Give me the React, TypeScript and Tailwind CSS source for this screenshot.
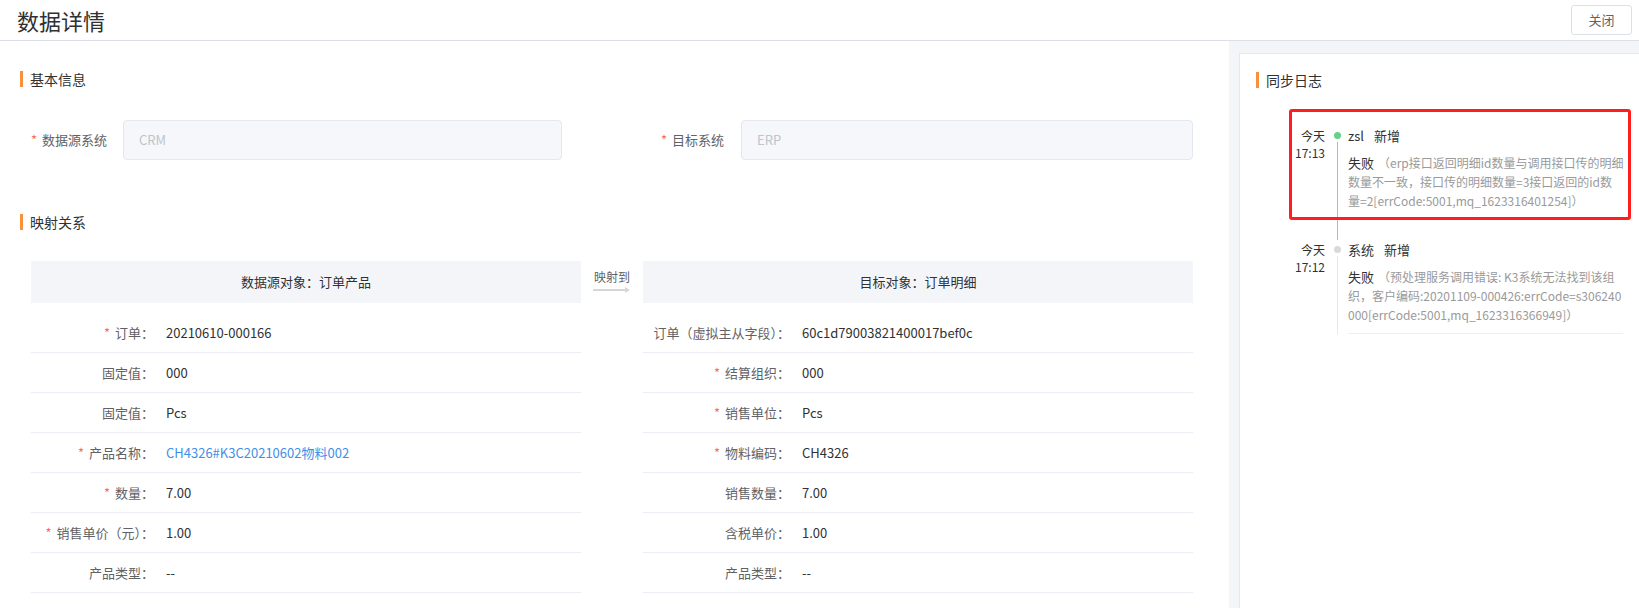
import React from 'react';

interface Field {
  label: string;
  value: string;
  required?: boolean;
  link?: boolean;
}

const sourceFields: Field[] = [
  { label: '订单：', value: '20210610-000166', required: true },
  { label: '固定值：', value: '000' },
  { label: '固定值：', value: 'Pcs' },
  { label: '产品名称：', value: 'CH4326#K3C20210602物料002', required: true, link: true },
  { label: '数量：', value: '7.00', required: true },
  { label: '销售单价（元）：', value: '1.00', required: true },
  { label: '产品类型：', value: '--' }
];

const targetFields: Field[] = [
  { label: '订单（虚拟主从字段）：', value: '60c1d79003821400017bef0c' },
  { label: '结算组织：', value: '000', required: true },
  { label: '销售单位：', value: 'Pcs', required: true },
  { label: '物料编码：', value: 'CH4326', required: true },
  { label: '销售数量：', value: '7.00' },
  { label: '含税单价：', value: '1.00' },
  { label: '产品类型：', value: '--' }
];

const logs = [
  {
    day: '今天',
    time: '17:13',
    user: 'zsl',
    action: '新增',
    active: true,
    lines: [
      '（erp接口返回明细id数量与调用接口传的明细',
      '数量不一致，接口传的明细数量=3接口返回的id数',
      '量=2[errCode:5001,mq_1623316401254]）'
    ]
  },
  {
    day: '今天',
    time: '17:12',
    user: '系统',
    action: '新增',
    active: false,
    lines: [
      '（预处理服务调用错误: K3系统无法找到该组',
      '织，客户编码:20201109-000426:errCode=s306240',
      '000[errCode:5001,mq_1623316366949]）'
    ]
  }
];

function SectionTitle({ text }: { text: string }) {
  return (
    <div className="flex items-center h-[20px]">
      <span className="w-[3px] h-[16px] bg-[#f7913d]" />
      <span className="ml-[7px] text-[14px] text-[#303133]">{text}</span>
    </div>
  );
}

function Star() {
  return <span className="text-[#f56c6c] mr-[5px]">*</span>;
}

function FieldRows({ fields, labelWidth }: { fields: Field[]; labelWidth: string }) {
  return (
    <div>
      {fields.map((f, i) => (
        <div key={i} className="flex items-center h-[40px] border-b border-[#ebeef5] text-[13px]">
          <div className={`${labelWidth} text-right text-[#606266] whitespace-nowrap`}>
            {f.required && <Star />}
            {f.label}
          </div>
          <div className={`pl-[12px] ${f.link ? 'text-[#3f8fe6]' : 'text-[#303133]'}`}>{f.value}</div>
        </div>
      ))}
    </div>
  );
}

export default function App() {
  return (
    <div className="w-[1639px] h-[608px] overflow-hidden bg-white font-[family-name:'Noto_Sans_CJK_SC',sans-serif] flex flex-col">
      {/* Header */}
      <div className="h-[41px] flex-shrink-0 border-b border-[#dcdfe6] flex items-center justify-between pl-[17px] pr-[7px]">
        <h1 className="text-[22px] text-[#303133] leading-none">数据详情</h1>
        <button className="w-[61px] h-[30px] border border-[#dcdfe6] rounded-[3px] text-[13px] text-[#606266] bg-white">
          关闭
        </button>
      </div>

      <div className="flex flex-1 min-h-0">
        {/* Main content */}
        <div className="flex-1 pt-[28px] pl-[20px]">
          <SectionTitle text="基本信息" />

          <div className="flex mt-[31px] text-[13px]">
            <div className="flex items-center">
              <div className="w-[103px] text-right pr-[16px] text-[#606266]">
                <Star />
                数据源系统
              </div>
              <div className="w-[439px] h-[40px] rounded-[4px] border border-[#e4e7ed] bg-[#f5f7fa] flex items-center px-[15px] text-[#c0c4cc]">
                CRM
              </div>
            </div>
            <div className="flex items-center">
              <div className="w-[179px] text-right pr-[17px] text-[#606266]">
                <Star />
                目标系统
              </div>
              <div className="w-[452px] h-[40px] rounded-[4px] border border-[#e4e7ed] bg-[#f5f7fa] flex items-center px-[15px] text-[#c0c4cc]">
                ERP
              </div>
            </div>
          </div>

          <div className="mt-[52px]">
            <SectionTitle text="映射关系" />
          </div>

          <div className="flex mt-[29px] pl-[11px]">
            <div className="w-[550px]">
              <div className="h-[42px] bg-[#f4f5f9] flex items-center justify-center text-[13px] text-[#303133]">
                数据源对象：订单产品
              </div>
              <div className="mt-[10px]">
                <FieldRows fields={sourceFields} labelWidth="w-[123px]" />
              </div>
            </div>
            <div className="w-[62px] h-[42px] flex flex-col items-center justify-center">
              <span className="text-[12px] text-[#606266] leading-[14px]">映射到</span>
              <svg width="38" height="8" viewBox="0 0 38 8" className="mt-[2px]">
                <line x1="0" y1="4" x2="33" y2="4" stroke="#d6d6d6" strokeWidth="2" />
                <path d="M32 1 L37 4 L32 7 Z" fill="#d6d6d6" />
              </svg>
            </div>
            <div className="w-[550px]">
              <div className="h-[42px] bg-[#f4f5f9] flex items-center justify-center text-[13px] text-[#303133]">
                目标对象：订单明细
              </div>
              <div className="mt-[10px]">
                <FieldRows fields={targetFields} labelWidth="w-[147px]" />
              </div>
            </div>
          </div>
        </div>

        {/* Sync log */}
        <div className="w-[410px] flex-shrink-0 bg-[#f4f5f9] pl-[10px] pt-[12px]">
          <div className="h-full bg-white border-l border-t border-[#e6e8ee] pt-[16px] pl-[16px] pr-[16px]">
            <SectionTitle text="同步日志" />
            <div className="relative mt-[16px] pl-[23px]">
              {logs.map((log, i) => (
                <div key={i} className="flex">
                  <div className="w-[46px] pt-[21px] text-right text-[12px] text-[#303133] leading-[17px]">
                    <div>{log.day}</div>
                    <div>{log.time}</div>
                  </div>
                  <div className="w-[23px] relative">
                    <span
                      className={`absolute left-[9px] top-[26px] w-[7px] h-[7px] rounded-full ${
                        log.active ? 'bg-[#67d08a]' : 'bg-[#d9d9d9]'
                      }`}
                    />
                    <span
                      className={`absolute left-[12px] w-px top-[36px] ${
                        log.active ? 'bg-[#7fd99b] -bottom-[20px]' : 'bg-[#e8e8e8] bottom-0'
                      }`}
                    />
                  </div>
                  <div className="w-[275px] pt-[20px] pb-[9px] border-b border-[#ebeef5]">
                    <div className="h-[20px] flex items-center text-[13px] text-[#303133]">
                      <span>{log.user}</span>
                      <span className="ml-[10px]">{log.action}</span>
                    </div>
                    <div className="mt-[7px] text-[12px] leading-[19px] text-[#9a9a9a] whitespace-nowrap">
                      <span className="text-[13px] text-[#303133]">失败</span>
                      <span className="ml-[4px]">{log.lines[0]}</span>
                      <br />
                      {log.lines[1]}
                      <br />
                      {log.lines[2]}
                    </div>
                  </div>
                </div>
              ))}
              {/* highlight box */}
              <div className="absolute left-[33px] top-[3px] w-[342px] h-[111px] border-[3px] border-[#ff1e1e] rounded-[3px] pointer-events-none" />
            </div>
          </div>
        </div>
      </div>
    </div>
  );
}
